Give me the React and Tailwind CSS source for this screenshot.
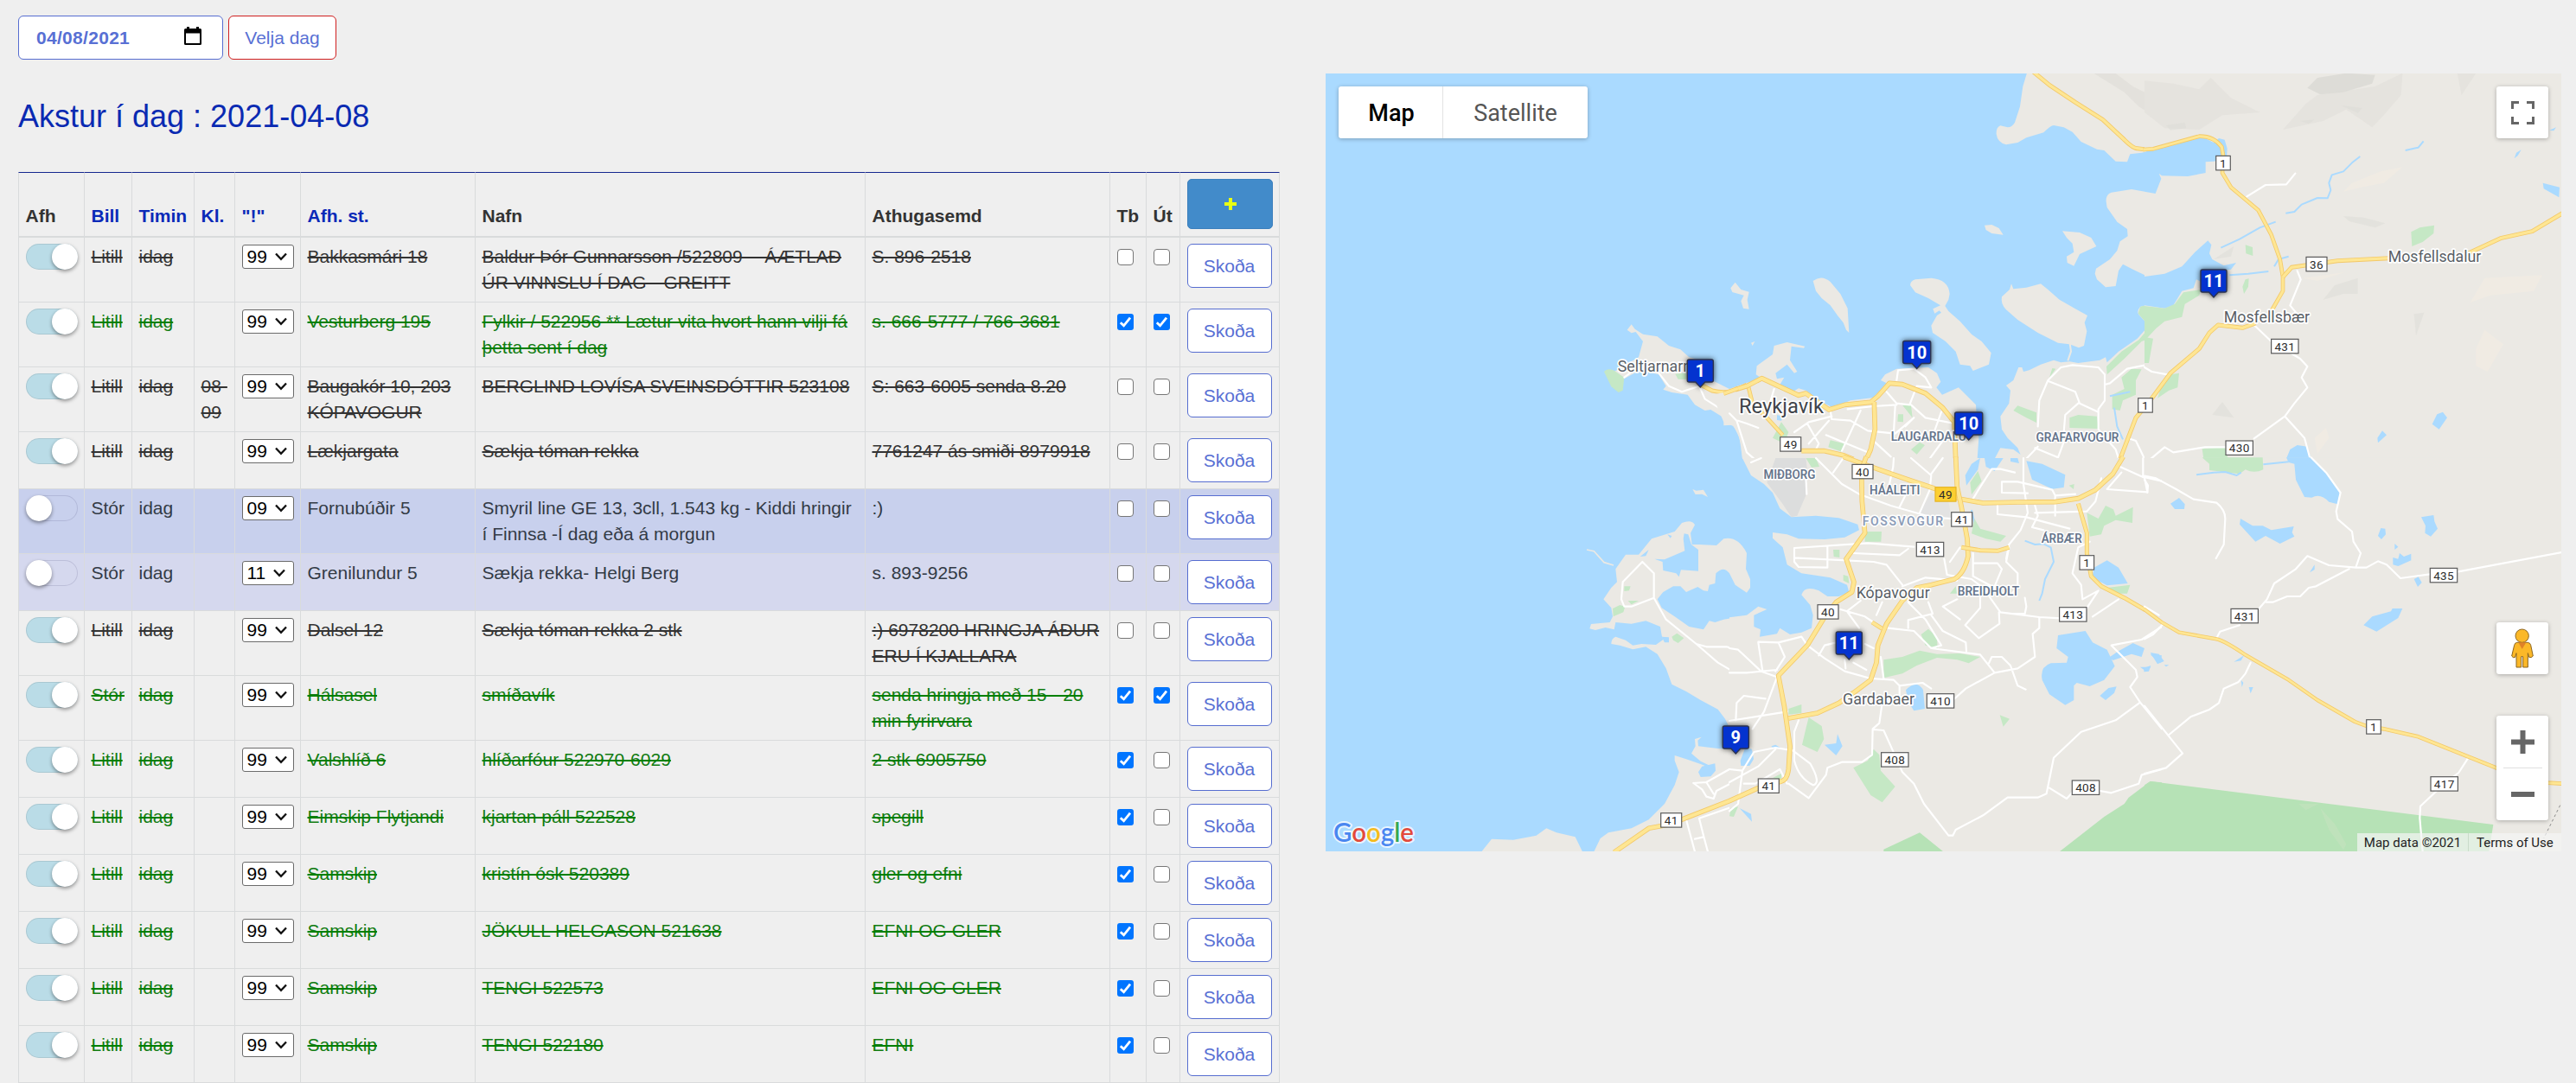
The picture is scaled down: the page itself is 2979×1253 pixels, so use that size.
import React from "react";

const rows = [
  { on: true, tone: "dark", bill: "Litill", kl: "", sel: "99", st: "Bakkasmári 18", nafn: "Baldur Þór Gunnarsson /522809 - -ÁÆTLAÐ\nÚR VINNSLU Í DAG-- GREITT", ath: "S. 896-2518", tb: false, ut: false, tall: true },
  { on: true, tone: "green", bill: "Litill", kl: "", sel: "99", st: "Vesturberg 195", nafn: "Fylkir / 522956 ** Lætur vita hvort hann vilji fá\nþetta sent í dag", ath: "s. 666-5777 / 766-3681", tb: true, ut: true, tall: true },
  { on: true, tone: "dark", bill: "Litill", kl: "08-\n09", sel: "99", st: "Baugakór 10, 203\nKÓPAVOGUR", nafn: "BERGLIND LOVÍSA SVEINSDÓTTIR 523108", ath: "S: 663-6005 senda 8.20", tb: false, ut: false, tall: true },
  { on: true, tone: "dark", bill: "Litill", kl: "", sel: "99", st: "Lækjargata", nafn: "Sækja tóman rekka", ath: "7761247 ás smiði 8979918", tb: false, ut: false },
  { on: false, bg: "bg-[#c8d0ed]", bill: "Stór", kl: "", sel: "09", st: "Fornubúðir 5", nafn: "Smyril line GE 13, 3cll, 1.543 kg - Kiddi hringir\ní Finnsa -Í dag eða á morgun", ath: ":)", tb: false, ut: false, tall: true },
  { on: false, bg: "bg-[#d5d8ee]", bill: "Stór", kl: "", sel: "11", st: "Grenilundur 5", nafn: "Sækja rekka- Helgi Berg", ath: "s. 893-9256", tb: false, ut: false },
  { on: true, tone: "dark", bill: "Litill", kl: "", sel: "99", st: "Dalsel 12", nafn: "Sækja tóman rekka 2 stk", ath: ":) 6978200 HRINGJA ÁÐUR\nERU Í KJALLARA", tb: false, ut: false, tall: true },
  { on: true, tone: "green", bill: "Stór", kl: "", sel: "99", st: "Hálsasel", nafn: "smíðavík", ath: "senda hringja með 15 - 20\nmin fyrirvara", tb: true, ut: true, tall: true },
  { on: true, tone: "green", bill: "Litill", kl: "", sel: "99", st: "Valshlíð 6", nafn: "hlíðarfóur 522970-6029", ath: "2 stk 6905750", tb: true, ut: false },
  { on: true, tone: "green", bill: "Litill", kl: "", sel: "99", st: "Eimskip Flytjandi", nafn: "kjartan páll 522528", ath: "spegill", tb: true, ut: false },
  { on: true, tone: "green", bill: "Litill", kl: "", sel: "99", st: "Samskip", nafn: "kristín ósk 520389", ath: "gler og efni", tb: true, ut: false },
  { on: true, tone: "green", bill: "Litill", kl: "", sel: "99", st: "Samskip", nafn: "JÖKULL HELGASON 521638", ath: "EFNI OG GLER", tb: true, ut: false },
  { on: true, tone: "green", bill: "Litill", kl: "", sel: "99", st: "Samskip", nafn: "TENGI 522573", ath: "EFNI OG GLER", tb: true, ut: false },
  { on: true, tone: "green", bill: "Litill", kl: "", sel: "99", st: "Samskip", nafn: "TENGI 522180", ath: "EFNI", tb: true, ut: false },
];

const head = [
  ["Afh", false], ["Bill", true], ["Timin", true], ["Kl.", true], ['"!"', true],
  ["Afh. st.", true], ["Nafn", false], ["Athugasemd", false], ["Tb", false], ["Út", false],
];

const tones = {
  dark: "text-[#333333] line-through decoration-2",
  green: "text-[#117c11] line-through decoration-[#008000] decoration-2",
};

function Toggle({ on }) {
  return on ? (
    <div className="flex h-[30px] w-[60px] justify-end rounded-full bg-[#badce7] shadow-[inset_0_0_0_1px_rgba(0,0,0,0.09)]">
      <div className="size-[30px] rounded-full bg-white shadow-[0_2px_4px_rgba(0,0,0,0.4)]" />
    </div>
  ) : (
    <div className="flex h-[30px] w-[60px] rounded-full shadow-[inset_0_0_0_1px_rgba(60,60,110,0.16)]">
      <div className="size-[30px] rounded-full bg-white shadow-[0_2px_4px_rgba(0,0,0,0.4)]" />
    </div>
  );
}

function Check({ on }) {
  return on ? (
    <div className="mt-[6px] flex size-[19px] items-center justify-center rounded-[3px] bg-[#0075ff]">
      <svg viewBox="0 0 19 19" className="size-[19px]" fill="none" stroke="#fff" strokeWidth="2.8">
        <path d="M3.8 10.2 L7.6 13.8 L15 4.6" />
      </svg>
    </div>
  ) : (
    <div className="mt-[6px] size-[19px] rounded-[4px] border border-[#767676] bg-white" />
  );
}

function Select({ value }) {
  return (
    <div className="mt-[1px] flex h-[28px] w-[60px] items-center rounded-[3px] border border-[#6b6b6b] bg-white pl-[5px] text-black">
      <span className="leading-[26px]">{value}</span>
      <svg viewBox="0 0 14 10" className="ml-[9px] h-[10px] w-[14px]" fill="none" stroke="#111" strokeWidth="2.3">
        <path d="M1 1.5 L7 7.8 L13 1.5" />
      </svg>
    </div>
  );
}

function Cell({ first, className = "", children }) {
  return (
    <td className={"border-l border-[#d9dbdc] p-0 pl-[7.5px] pt-[7px] align-top whitespace-pre " + (first ? "border-t-2 " : "border-t ") + className}>
      {children}
    </td>
  );
}

const LAND = "#ebe9e4";
const SEA = "#aadaff";
const PARK = "#c5e8c5";

const Land = ({ d }) => <path d={d} fill={LAND} />;
const Water = ({ d }) => <path d={d} fill={SEA} />;
const Green = ({ d }) => <path d={d} fill={PARK} />;
const River = ({ d }) => <path d={d} fill="none" stroke={SEA} strokeWidth="6" strokeLinejoin="round" />;
const Street = ({ d }) => <path d={d} fill="none" stroke="#ffffff" strokeWidth="6.5" strokeLinejoin="round" strokeLinecap="round" />;
const Highway = ({ d, w = 17 }) => (
  <g fill="none" strokeLinejoin="round">
    <path d={d} stroke="#f3c969" strokeWidth={w} />
    <path d={d} stroke="#fee693" strokeWidth={w - 5} />
  </g>
);
const Sector = ({ x, y, children }) => <g transform={`translate(${x} ${y}) scale(0.333333)`}>{children}</g>;

const towns = [
  ["Seltjarnarnes", 1870.7, 429.5, 104, 18.5],
  ["Reykjavík", 2011, 477.5, 98, 24.5],
  ["Mosfellsbær", 2571.7, 373, 99.3, 19],
  ["Mosfellsdalur", 2761.7, 303, 107.7, 19],
  ["Kópavogur", 2146.7, 692, 85, 19],
  ["Gardabaer", 2131, 814.6, 83, 19],
];
const districts = [
  ["LAUGARDALU", 2186.7, 510.3, 87],
  ["GRAFARVOGUR", 2354.5, 511.3, 96],
  ["MIÐBORG", 2039.5, 553.6, 60],
  ["HÁALEITI", 2162, 572.3, 58.5],
  ["FOSSVOGUR", 2153.7, 608.3, 93.5],
  ["ÁRBÆR", 2360.7, 628, 47],
  ["BREIDHOLT", 2263.7, 689.3, 71.5],
];
const shields = [
  ["49", 2070.7, 514], ["49", 2250, 572], ["40", 2154, 545.7], ["41", 2268.7, 601], ["413", 2232, 635.7],
  ["1", 2413.3, 651], ["40", 2114, 708], ["413", 2397.3, 711], ["410", 2244, 811], ["408", 2191.3, 879],
  ["408", 2412, 911.3], ["41", 2045.3, 909.3], ["41", 1932.7, 949], ["1", 2481, 469], ["1", 2571, 188.7],
  ["36", 2679, 305.7], ["431", 2642.3, 400.7], ["430", 2589.7, 518.3], ["431", 2595.7, 712.7],
  ["435", 2826, 665.7], ["1", 2745, 841], ["417", 2826.7, 907],
];
const pins = [
  ["1", 1966.3, 429, 30], ["10", 2216.7, 407.5, 32], ["10", 2276.7, 490, 32],
  ["11", 2560, 325, 30], ["11", 2138.3, 744, 30], ["9", 2007.3, 853, 30],
];

function MapCanvas() {
  return (
    <svg viewBox="1533 85 1429 900" className="block h-[900px] w-[1429px]" fontFamily="Roboto, sans-serif">
      <rect x="1533" y="85" width="1429" height="900" fill={SEA} />

      {/* Seltjarnarnes */}
      <Sector x={1520} y={70}>
        <Land d="M1085 935 L1100 916 L1112 932 L1140 950 L1190 958 L1230 990 L1270 1003 L1300 1030 L1340 1040 L1380 1110 L1440 1140 L1500 1118 L1560 1110 L1560 1382 L1485 1382 L1482 1340 L1468 1290 L1450 1265 L1420 1267 L1420 1240 L1375 1212 L1355 1215 L1320 1195 L1295 1160 L1240 1152 L1210 1142 L1220 1130 L1195 1090 L1130 1075 L1075 1104 L1040 1080 L1125 1030 L1140 975 L1115 942 L1100 946 Z" />
        <Green d="M1005 1080 Q1015 1066 1040 1076 L1075 1100 L1070 1145 L1055 1152 L1030 1132 Z M1252 1088 L1290 1083 L1290 1107 L1262 1106 Z" />
        <Street d="M1075 1100 L1095 1085 M1195 1085 L1230 1130 L1275 1150 L1335 1130 L1355 1175 L1450 1235 L1470 1260 L1500 1340 M1470 1255 L1500 1235" />
        <Highway w={15} d="M1340 1125 L1380 1146 Q1430 1158 1465 1142 L1500 1126" />
      </Sector>

      {/* Reykjavík harbour, islands, Grafarvogur */}
      <Sector x={2000} y={70}>
        <Land d="M1033 40 L1018 90 L1008 160 L990 215 Q980 232 965 232 L940 226 Q925 232 926 255 Q930 285 960 292 L1000 285 L1030 268 L1090 250 Q1115 225 1125 225 L1160 232 L1190 248 L1220 282 L1275 308 L1300 312 L1340 350 L1380 352 L1390 325 L1430 320 L1450 316 L1450 40 Z" />
        <Land d="M1450 457 L1395 447 L1325 458 Q1305 465 1307 490 L1310 510 L1345 560 L1380 585 L1382 610 L1355 628 L1345 660 L1320 690 L1272 722 L1268 740 L1275 760 L1305 787 L1340 783 L1350 730 L1365 707 L1400 725 L1450 749 Z" />
        <path d="M1265 45 L1340 45 L1400 90 L1500 140 L1500 210 L1420 160 L1370 110 Z" fill="#dddcd7" opacity=".6" />
        <Land d="M1450 848 L1425 855 Q1412 870 1420 882 L1455 920 L1415 965 L1350 1010 L1310 1048 L1305 1030 L1285 1040 L1210 1050 L1180 1045 L1150 1048 L1125 1040 L1080 1055 L1040 1075 L1020 1080 L1015 1065 L1003 1065 L985 1110 L960 1128 L975 1145 L970 1190 L940 1235 L945 1280 L965 1310 L1000 1345 L1010 1368 L985 1350 L940 1345 L920 1382 L1450 1382 Z" />
        <Land d="M-60 1160 L0 1148 L60 1122 L105 1098 L92 1090 L95 1060 L150 1020 L155 990 L200 978 L262 992 L258 998 L215 992 L210 1040 L235 1080 L225 1085 L200 1055 L160 1085 L165 1105 L190 1100 L175 1125 L220 1150 L240 1138 L265 1145 L290 1165 L330 1190 L360 1205 L420 1180 L500 1170 L545 1120 L525 1110 L540 1090 L580 1070 L690 1065 L720 1085 L733 1115 L718 1135 L738 1160 L795 1135 L825 1165 L855 1195 L858 1250 L865 1310 L860 1382 L45 1382 L35 1310 L15 1270 L-20 1255 Z" />
        <Land d="M290 765 Q320 742 350 768 L385 810 L410 860 L415 945 L405 935 L395 910 L375 885 L350 850 L320 825 L300 800 Z" />
        <Land d="M627 780 Q628 765 645 760 L700 755 Q760 760 764 810 L760 830 L748 852 L760 870 L800 905 L840 950 L875 975 L908 1015 L900 1055 L845 1077 L835 1060 L800 1055 L785 1010 L750 975 L705 945 L700 920 L720 885 L735 875 L728 868 L712 878 L706 862 L732 850 L690 825 L645 805 Z" />
        <Land d="M945 820 L972 795 L978 775 L985 793 L1030 788 L1080 775 L1105 795 L1145 830 L1200 862 L1242 885 L1232 910 L1240 940 L1230 990 L1212 997 L1180 985 L1140 980 L1070 945 L1000 900 L960 865 Q940 845 945 820 Z" />
        <Land d="M885 572 L910 570 L935 582 L950 605 L910 600 L890 588 Z M1155 592 L1215 597 L1255 615 L1273 645 L1215 672 L1195 713 L1172 702 L1170 680 L1195 665 L1190 635 L1170 615 Z M4 790 L20 770 L40 795 L68 803 L62 830 L68 863 L48 860 L40 835 L50 815 L10 804 Z M75 980 L88 975 L80 990 Z" />
        <path d="M1181 982 L1185 1010 L1174 1042" fill="none" stroke={LAND} strokeWidth="6" />
        <Green d="M1425 855 Q1440 845 1500 860 L1500 960 L1455 1050 L1442 1048 L1455 965 L1430 975 L1370 1035 L1310 1090 L1308 1062 L1360 1010 L1420 970 L1458 925 L1418 878 Z M1360 1100 L1395 1070 L1430 1072 L1410 1110 L1410 1160 L1365 1180 L1355 1215 L1328 1210 L1328 1160 L1370 1140 Z M985 1215 L1000 1198 L1065 1222 L1065 1257 L1030 1240 Z M1180 1240 L1210 1230 L1275 1235 L1280 1278 L1180 1275 Z M180 1255 L205 1290 L190 1330 L150 1310 Z M350 1318 L398 1330 L390 1358 L343 1342 Z M585 1228 L603 1228 L603 1255 L583 1253 Z M600 1196 L630 1196 L635 1240 Z M630 1350 L660 1325 L678 1335 L650 1367 Z M1120 1068 L1132 1070 L1110 1100 Z" />
        <River d="M1335 1205 L1345 1270 L1365 1315 M1320 1165 L1390 1150" />
        <Water d="M165 1230 L185 1235 L180 1250 L165 1248 Z" />
        <Street d="M0 1225 L25 1250 L60 1360 L85 1382 M30 1250 L60 1260 L100 1275 M155 1140 L140 1190 M350 1215 L355 1245 L420 1250 L480 1285 L575 1295 L640 1240 M455 1215 L390 1355 M345 1250 L275 1330 M270 1260 L310 1330 L300 1350 M335 1300 L480 1360 M545 1150 L580 1190 L625 1195 L650 1130 L700 1135 M580 1110 L585 1075 L640 1070 L680 1100 L700 1135 M410 1210 L500 1200 L580 1195 M575 1200 L570 1290 M630 1195 L680 1240 L780 1260 M735 1220 L710 1290 M505 1325 L560 1375 M740 1320 L695 1382 M640 1240 L610 1270 M225 1290 L275 1255 L355 1235" />
        <Street d="M1070 1270 L1075 1180 L1105 1110 L1150 1065 L1190 1057 L1280 1065 L1302 1090 L1302 1180 L1280 1210 L1280 1280 L1340 1350 L1350 1382 M1105 1112 L1200 1150 L1215 1190 L1280 1220 M1210 1190 L1165 1230 L1160 1290 M1070 1340 L1030 1382 M1060 1345 L1140 1378 L1165 1310 L1200 1310 M1302 1125 L1320 1120 L1380 1070 L1440 1058 L1500 1088 M1380 1310 L1410 1320 L1440 1382" />
        <Highway w={14} d="M65 1130 L80 1190 L130 1240 L185 1300" />
        <Highway d="M20 1142 L60 1130 L112 1103 L240 1162 L265 1155 L345 1212 L400 1195 L490 1186 L515 1165 L555 1120 L600 1124 L680 1155 L740 1205 L780 1255 L785 1384 M502 1185 L505 1280 L490 1350 L475 1384 M250 1355 L330 1355 L395 1370 L430 1384" />
        <Highway w={15} d="M-20 1156 L30 1138" />
        <Highway w={15} d="M1055 40 L1110 85 L1200 145 L1295 205 L1370 275 Q1400 305 1415 305 L1445 309" />
      </Sector>

      {/* Mosfellsbær */}
      <Sector x={2480} y={70}>
        <rect x="0" y="44" width="1450" height="1340" fill={LAND} />
        <g fill="#dddcd7">
          <path d="M565 95 L600 60 L700 44 L800 50 L790 80 L690 110 L610 118 Z" />
          <path d="M0 70 L100 80 L190 100 L230 60 L300 130 L400 180 L270 190 L190 240 L70 235 L0 180 Z M480 240 L560 150 L600 120 L800 90 L895 44 L890 120 L830 190 L790 232 L700 170 L620 210 Z M1085 44 L1150 44 L1100 120 Z" opacity=".45" />
          <path d="M75 225 L140 215 L145 235 L90 242 Z M680 155 L755 165 L740 182 Z M540 210 L590 205 L570 220 Z M690 540 L760 545 L835 565 L800 580 L710 558 Z M620 830 L660 780 L740 755 L740 810 L690 810 Z M935 880 L970 875 L942 955 Z M235 1230 L270 1185 L310 1240 Z M240 690 L310 645 L300 680 Z" opacity=".55" />
        </g>
        <path d="M690 455 L720 425 L820 385 L895 370 L830 425 L750 440 Z M1130 840 L1180 755 L1380 745 L1350 800 L1200 815 Z M1150 1000 L1180 935 L1245 985 L1190 1080 L1150 1060 Z M550 755 L695 735 L600 765 Z M590 1310 L630 1275 L640 1310 L600 1365 Z" fill="#f0ebe3" />
        <Water d="M0 318 L30 308 L200 265 L240 285 L258 270 L278 275 L287 305 L285 340 L240 350 L212 352 L212 390 L150 402 L60 400 L50 392 L58 410 L38 462 L0 455 Z M0 750 L70 740 L130 715 L175 665 L220 625 L232 640 L225 670 L235 690 L275 712 L318 702 L300 725 L265 730 L200 770 L180 760 L170 790 L130 800 L100 850 L70 860 L0 850 Z" />
        <Water d="M1382 425 L1440 440 L1438 475 L1385 445 Z M1015 1228 L1035 1220 L1050 1240 L1022 1280 L998 1262 Z M808 1310 L825 1285 L840 1300 L810 1327 Z M492 1382 L505 1350 L530 1335 L565 1340 L578 1382 Z M1283 340 L1290 320 L1307 310 L1295 330 Z M1405 242 L1428 232 L1420 244 Z M0 910 L15 915 L0 930 Z" />
        <River d="M490 530 L520 525 L545 500 L600 477 L635 478 L646 450 L640 425 L650 397 L690 385 L720 355 L748 333 M265 650 L330 620 L400 580 L455 560 M295 745 L360 740 L430 732 M450 715 L465 690 L500 680 M905 312 L950 302 L968 280" />
        <Green d="M925 595 L955 580 L1005 572 L1003 600 L965 630 L928 645 Z M350 640 L375 648 L376 678 L352 670 Z M340 785 L350 760 L362 757 L360 785 L345 810 Z M0 852 L70 860 L105 845 L135 805 L195 795 L190 815 L140 845 L130 890 L70 905 L40 930 L10 962 L0 962 Z M0 960 L30 965 L15 1050 L0 1050 Z M45 1172 L60 1125 L90 1090 L120 1085 L115 1135 L85 1145 Z M200 1348 L280 1342 L290 1382 L205 1382 Z" />
        <Street d="M355 472 L420 432 L492 430 L523 392 M530 730 L542 760 L505 850 L530 880 M380 918 L440 975 L540 1035 L565 1062 L545 1100 L565 1135 L520 1190 L487 1235 L380 1312 M487 1235 L555 1310 L575 1384 M290 1342 L210 1342 L100 1360 L70 1342 L20 1384 M0 1065 L25 1080 L80 1090" />
        <Highway w={14} d="M-5 309 L30 307 L190 263 Q240 262 268 300 L273 330 L270 390 L300 440 L395 520 L440 605 L470 690 L480 750 L480 800 L440 870" />
        <Highway w={15} d="M480 752 L510 718 L670 695 L850 686 M1125 668 L1235 617 L1345 593 L1450 530" />
        <Highway w={15} d="M385 912 L340 928 L255 918 L225 945 L190 1000 L90 1085 L20 1180 L-30 1240 L-85 1384" />
      </Sector>

      {/* Álftanes and Hafnarfjörður shore */}
      <Sector x={1520} y={530}>
        <Land d="M1312 108 L1325 113 L1350 110 L1365 135 L1345 125 L1322 126 Z" />
        <Land d="M1045 385 L1080 335 L1125 335 L1170 280 L1250 255 L1275 225 Q1310 212 1320 232 L1305 260 L1310 300 L1335 300 L1395 303 L1420 280 Q1470 270 1500 330 L1497 385 L1512 420 L1512 450 L1500 467 L1460 440 L1440 400 Q1420 372 1393 400 L1390 435 L1370 440 L1365 462 L1350 460 L1330 447 L1290 465 L1270 445 L1245 445 L1210 465 L1190 490 L1205 520 L1250 550 L1300 585 L1350 595 L1370 565 L1390 570 L1420 560 L1480 550 L1500 548 L1500 1000 L1500 1040 L1480 1040 L1478 1070 L1500 1075 L1500 1366 L970 1366 L992 1320 L1020 1300 L1100 1285 L1160 1255 L1215 1200 L1250 1135 L1265 1090 L1250 1050 L1250 1032 L1290 1045 L1340 1062 L1380 1078 L1378 1070 L1340 1052 L1308 1025 L1322 1000 L1320 975 L1343 968 L1330 980 L1332 1000 L1400 1008 L1450 1010 L1440 935 L1425 905 L1400 872 L1340 840 L1290 810 L1240 785 L1220 730 L1190 680 L1150 655 L1105 664 L1060 650 L1030 645 Q1030 625 1045 620 L1080 632 L1105 650 L1135 645 L1185 648 L1210 630 L1205 615 L1200 585 L1150 565 L1100 575 L1045 570 L1040 595 L1010 588 L975 597 L955 592 L960 576 L1025 570 L1035 550 L1030 520 L1003 490 L1030 450 L1050 430 Z" />
        <Land d="M580 1366 L615 1322 L690 1325 L770 1310 L805 1285 L840 1300 L905 1315 L930 1366 Z" />
        <Water d="M1283 262 L1297 265 L1308 300 L1332 318 L1332 392 L1272 388 L1265 412 L1255 400 L1210 390 L1208 360 L1180 350 L1215 352 L1285 322 L1280 280 Z M1130 342 L1160 318 L1150 340 Z M1345 1070 L1390 1060 L1392 1085 L1375 1105 L1340 1107 L1332 1090 Z M1225 265 L1240 270 L1235 278 Z M1205 620 L1230 622 L1230 640 L1215 640 Z" />
        <path d="M945 318 L970 323 L1005 362 L1038 372" fill="none" stroke={LAND} strokeWidth="5" />
        <Green d="M1035 522 L1060 510 L1078 515 L1072 535 L1037 550 Z M1088 495 L1125 495 L1100 508 Z M1075 445 L1097 445 L1092 460 L1075 462 Z M1240 620 L1258 608 L1282 625 L1262 642 L1245 632 Z M1445 1215 L1470 1205 L1462 1240 L1440 1243 Z" />
        <Street d="M1138 360 L1070 430 L1065 490 L1075 515 L1100 515 L1178 485 L1178 400 Z M1178 485 L1220 560 L1325 645 L1360 655 L1430 655 L1465 665 L1505 705 M1325 645 L1400 710 L1460 745 L1505 743 M1500 825 L1485 830 L1465 855 L1462 920 L1500 912 M1315 1128 L1345 1150 L1360 1175 L1385 1182 L1395 1155 L1500 1100 M1315 1128 L1360 1125 L1385 1165 M1360 1125 L1440 1080 L1500 1085 M1485 1090 L1465 1205 L1335 1250 L1350 1310 L1365 1366 M1290 1255 L1320 1366 M1320 1322 L1350 1315" />
      </Sector>

      {/* Kópavogur, Garðabær, Árbær */}
      <Sector x={2000} y={530}>
        <Land d="M45 0 L75 60 L120 90 L150 120 L175 175 L215 205 L300 200 L380 208 L445 230 L450 250 L400 275 L330 282 L240 280 L200 265 L150 258 L150 278 L185 310 L200 370 L250 400 L350 415 L408 440 L415 465 L380 480 L340 480 L310 460 Q260 440 250 475 L280 510 L290 545 L285 590 L250 605 L210 612 L175 590 L165 610 L105 620 L108 595 L85 585 L85 545 L130 525 L100 515 L60 545 L0 553 L0 935 L20 1000 L0 1030 L0 1366 L1500 1366 L1500 0 Z" />
        <path d="M160 0 L265 0 L272 60 L265 130 L235 200 L215 205 L185 160 L130 85 Z" fill="#dcdddd" />
        <path d="M450 130 L560 165 L700 210 L770 210 L760 150 L700 120 L660 190 Z" fill="#e3e3e3" />
        <Water d="M1030 10 L1085 20 L1165 58 L1160 102 L1120 107 L1050 75 Z M818 60 L840 20 L870 0 L862 40 L822 95 Z M885 0 L950 0 L920 45 L890 30 Z M975 0 L1000 0 L1005 18 L975 12 Z M1265 380 L1310 355 L1350 380 L1382 435 L1310 442 L1258 415 Z M1140 615 L1235 600 L1260 640 L1310 665 L1337 722 L1300 770 L1250 792 L1205 780 L1195 790 L1195 840 L1165 857 L1110 820 L1085 770 Q1076 725 1115 712 L1170 710 L1175 690 L1135 660 Z M1285 825 L1315 798 L1343 793 L1335 815 L1305 840 Z M612 805 Q650 765 672 805 L678 870 L640 877 L620 845 Z M330 995 L370 990 L375 958 L392 1000 L370 1032 Z M35 1215 L75 1235 L78 1262 Z M1350 670 L1400 642 L1440 660 L1430 690 L1395 680 L1330 702 L1320 690 Z M1425 725 L1462 725 L1445 740 Z M1460 682 L1500 685 L1495 712 Z M38 1050 L55 1005 L78 1010 L84 1045 L70 1068 L40 1068 Z M145 1000 L160 995 L185 1010 L150 1005 Z" />
        <River d="M1025 287 L1060 300 L1090 298 L1115 310 L1125 360 L1095 420 L1085 470 L1075 495 M840 180 L850 225 L870 250 M1320 700 L1350 672" />
        <Green d="M265 0 L300 0 L312 30 L285 32 Z M470 255 L528 255 L526 290 L470 290 Z M360 318 L382 318 L382 345 L362 342 Z M835 85 L862 45 L875 80 L840 127 Z M850 210 L870 245 L960 270 L940 290 L890 280 L840 262 Z M1240 190 L1280 210 L1305 165 L1332 178 L1340 200 L1370 185 L1400 170 L1398 225 L1340 215 L1300 235 L1290 265 L1250 272 Z M665 612 L690 593 L720 622 L722 660 L680 650 Z M535 700 L600 690 L660 668 L720 680 L800 678 L870 690 L830 712 L790 700 L720 693 L650 720 L600 748 L535 763 Z M275 900 L320 930 L328 975 L305 1020 L252 995 L265 940 Z M205 870 L250 855 L250 885 L205 890 Z M430 1075 L480 1050 L500 1010 L520 1030 L525 1085 L575 1140 L530 1195 L490 1170 Z M938 892 L972 905 L950 932 Z M1310 450 L1390 440 L1380 470 L1350 470 Z M395 405 L412 410 L415 435 L395 425 Z M1178 95 L1196 90 L1194 108 Z M765 470 L785 445 L790 470 Z M150 1110 L180 1095 L180 1115 Z M5 1215 L30 1210 L15 1245 L0 1243 Z" />
        <path d="M535 1358 L660 1300 L742 1366 L535 1366 Z M1145 1366 L1300 1245 L1370 1200 L1385 1178 L1460 1122 L1500 1126 L1500 1366 Z" fill="#b6e2b6" />
        <Street d="M300 0 L390 90 L450 125 L560 165 L700 205 L770 210 M360 50 L395 0 M570 0 L568 30 L555 90 M630 0 L700 60 L695 110 L660 190 M620 110 L590 170 M740 0 L700 55 M225 312 L225 360 L240 378 L340 380 L340 305 M225 312 L480 295 L640 308 M225 346 L500 360 L545 370 L600 440 M430 330 L590 337 L620 315 M265 60 L268 125 M75 15 L110 0" />
        <Street d="M600 445 L680 415 L790 425 M745 350 L755 405 L840 420 L880 450 L940 535 L1075 552 L1150 556 M800 310 L765 360 M845 330 L845 410 L920 450 M850 365 L930 365 L945 385 L920 445 M970 310 L960 360 L1000 400 L1000 450 L970 480 M870 480 L870 520 L818 580 L865 625 L937 575 L935 535 M1025 485 L1030 515 L1025 540 L975 540 M790 490 L740 515 L800 560 M620 500 L680 560 L735 650 L700 660 L640 600 L550 590 M690 500 L705 540 L620 562 L620 590 M700 545 L740 600 L820 640 L822 670 M700 660 L870 682 L920 745 L1000 730 L1060 690 L1052 610 L1075 590 L1075 555 M900 712 L910 690 L945 690 L975 720 L1000 790 L1028 803 M920 745 L820 800 L770 845 M510 545 L530 500" />
        <Street d="M385 525 L470 550 L500 570 M410 535 L450 590 M410 530 L455 495 M270 650 L330 695 L400 740 L490 765 L570 770 L590 790 L670 780 L700 800 M400 700 L403 730 M310 685 L330 650 L370 640 M430 710 L475 735 M470 645 L500 660 M590 790 L590 830 L530 850 L520 920 L497 940 L495 1030 L460 1055 L390 1055 L340 1075 L335 1100 L275 1180 L205 1130 M500 942 L535 945 L560 1000 L600 1090 L640 1130 L675 1200 L760 1310 L775 1310 L785 1290 L880 1240 L965 1178 L1070 1178 L1100 1165 L1125 1040 L1220 950 L1340 910 L1425 848 M1110 1145 L1170 1182 L1190 1160 M1285 1155 L1325 1162 L1420 1130 L1430 1100 L1500 1080 M1500 940 L1425 848 L1390 795 L1415 760 L1410 735 L1325 650 L1430 630 L1500 585 M525 690 L535 765" />
        <Street d="M0 660 L30 665 L110 740 L165 760 L120 880 L80 940 M0 745 L60 745 L165 735 M100 640 L115 740 M100 638 L170 640 L250 620 L270 650 M170 640 L192 690 L160 740 M22 910 L25 850 L50 825 L125 835 M0 912 L200 880 M0 1080 L45 1085 L85 1020 L160 1005 L220 1015 L280 1060 Q320 1130 290 1135 Q240 1110 225 1050 L225 950 L240 910 M45 1085 L30 1200 L0 1225 M0 1125 L100 1070 L160 1010 M50 1130 L90 1130 L175 1080 L200 1130" />
        <Street d="M1020 0 L1020 90 L1035 190 L1010 250 L970 300 L960 350 M945 120 L945 82 L1000 82 L1120 110 L1130 130 M930 150 L930 195 L1030 205 L1180 245 M945 120 L1035 122 M1130 130 L1130 200 M1060 165 L1070 200 L1050 240 L1090 250 M840 150 L870 100 L910 38 L940 38 L990 50 M1060 190 L1240 185 L1270 150 L1290 70 M1130 130 L1200 125 M1355 30 L1440 68 L1450 118 L1310 108 L1360 50 M1435 0 L1435 65 L1500 80 M1210 310 L1190 400 L1220 440 L1225 490 L1280 460 L1240 520 M1260 550 L1350 490 M1210 310 L1250 290 M1490 590 L1500 585" />
        <Highway w={17} d="M395 -5 L520 40 L620 75 L710 105 L800 142 L880 156 L1000 153 L1130 152 L1210 140 L1270 110 L1330 55 L1366 -5" />
        <Highway w={17} d="M785 -5 L790 100 L805 170 L825 280 L828 340 Q815 400 780 420 L700 440 L650 450 L600 495 L545 575 L515 650 L510 710 L490 770 L430 815 L380 850 L305 885 L205 903 M475 -5 L458 40 L460 150 L470 260 L405 350 L432 430 L425 465 L370 500 L325 560 L270 650 L170 755 L190 860 L210 1000 L205 1080 Q200 1118 180 1122 L100 1145 L0 1190 L-210 1272 L-280 1285 L-400 1368" />
        <Highway w={15} d="M805 310 L870 320 L930 322 L970 310 M495 570 L530 592 M1210 158 L1240 260 L1240 330 L1255 410 L1290 445 L1370 485 L1442 527" />
      </Sector>

      {/* Eastern heath */}
      <Sector x={2480} y={530}>
        <rect x="60" y="-1" width="1390" height="1368" fill={LAND} />
        <Water d="M492 -2 L578 -2 L640 60 L678 115 L670 160 L640 152 Q610 120 580 137 L555 135 L525 75 L520 20 L500 15 Z M90 158 L120 138 L140 160 L138 177 L105 177 Z M333 210 L375 235 L410 235 L440 250 L518 237 L512 258 L520 272 L470 297 L420 270 L385 290 L330 230 Z M960 205 L1003 198 L1006 220 L1017 245 L993 272 L973 260 L975 235 Z M810 270 L820 243 L835 245 L837 265 L822 282 Z M862 345 L880 350 L885 330 L900 342 L925 332 L925 355 L880 375 L862 370 Z M868 297 L880 308 L868 318 Z M935 420 L950 412 L962 432 L948 447 Z M760 580 L790 550 L855 532 L860 522 L895 522 L880 555 L805 602 Z M20 675 L50 680 L68 705 L45 715 Z M-2 728 L22 720 L15 740 L-2 742 Z M573 397 L590 370 L590 387 Z M310 707 L345 685 L335 703 Z M335 770 L343 780 L338 795 Z M362 795 L377 795 L368 817 Z M68 718 L85 718 L75 724 Z" />
        <Green d="M200 -2 L410 -2 L412 40 Q380 55 350 40 L330 55 L225 42 L225 20 Z" />
        <River d="M180 58 L240 50 L280 48 L320 60 L335 50 M412 22 L500 13" />
        <path d="M0 1135 L20 1122 L1210 1272 L1195 1366 L0 1366 Z" fill="#b6e2b6" />
        <path d="M610 1215 L660 1270 L700 1340 L690 1360 L640 1290 Z M535 1200 L605 1200 L560 1222 Z" fill="#c3e3bd" opacity=".7" />
        <Street d="M0 62 L40 70 L110 108 L170 143 L250 155 Q280 180 280 210 L275 300 L248 348 M0 75 L12 95 L10 120 M578 -2 L630 50 L680 120 L665 185 L670 212 L720 255 L725 290 L750 330 L733 380 M395 525 L425 490 L450 435 L525 385 L565 340 L640 372 L733 380 L770 380 L810 358 L840 370 L888 417 L990 403 M422 500 L445 500 L495 480 L540 480 L570 450 L595 445 L710 385 M1085 395 L1447 327 M330 580 L262 602 L250 625 M65 575 L30 612 L0 628 M0 515 L50 545 M0 860 L132 1025 L75 1075 L0 1095 M85 960 L160 898 L225 873 L258 850 L275 800 L325 778 L350 748 L368 710 M1122 1042 L1090 1092 L1040 1130 L957 1208 L955 1250 L965 1366" />
        <Highway w={13} d="M-2 524 L60 570 L120 605 L250 628 Q280 635 350 683 L500 770 L600 840 L730 915 L770 930" />
        <Highway w={14} d="M770 930 L830 940 L950 967 L1220 1075 L1320 1112 L1400 1127 L1450 1130" />
        <path d="M1442 1205 L1385 1320" stroke="#8a8a8a" strokeWidth="3" strokeDasharray="9 9" fill="none" />
      </Sector>

      {/* Labels */}
      {towns.map(([t, x, y, w, s]) => (
        <text key={t} x={x} y={y} textLength={w} lengthAdjust="spacingAndGlyphs" fontSize={s} fill={t === "Reykjavík" ? "#3f444a" : "#5a5f66"} stroke="#ffffff" strokeWidth="3.5" strokeLinejoin="round" paintOrder="stroke">{t}</text>
      ))}
      {districts.map(([t, x, y, w]) => (
        <text key={t} x={x} y={y} textLength={w} lengthAdjust={t === "FOSSVOGUR" ? "spacing" : "spacingAndGlyphs"} fontSize="14" fontWeight="600" fill={t === "FOSSVOGUR" ? "#8d9db8" : "#66758c"} stroke="#ffffff" strokeWidth="3" strokeLinejoin="round" paintOrder="stroke">{t}</text>
      ))}
      {shields.map(([t, x, y], i) => {
        const w = t.length === 1 ? 16.6 : t.length === 2 ? 24 : 31.4;
        return (
          <g key={i}>
            <rect x={x - w / 2} y={y - 8.3} width={w} height="16.4" fill={i === 1 ? "#fccf31" : "#ffffff"} stroke={i === 1 ? "#e6b422" : "#5b5b5b"} strokeWidth="1.2" />
            <text x={x} y={y + 4.8} fontSize="13.5" textAnchor="middle" fill="#2c2c2c" letterSpacing=".3">{t}</text>
          </g>
        );
      })}

      {/* Delivery pins */}
      {pins.map(([t, x, y, w], i) => (
        <g key={i}>
          <path d={`M${x - w / 2 + 2} ${y - 13} h${w - 4} q2 0 2 2 v22 q0 2 -2 2 h${-(w / 2 - 2 - 5.5)} l-5.5 6 l-5.5 -6 h${-(w / 2 - 2 - 5.5)} q-2 0 -2 -2 v-22 q0 -2 2 -2 z`} fill="#0433cf" stroke="#2c3350" strokeWidth="1.4" className="drop-shadow-[0_0_3px_rgba(0,0,0,0.7)]" />
          <text x={x} y={y + 7.4} fontSize="20" fontWeight="700" textAnchor="middle" fill="#ffffff" fontFamily="Roboto, sans-serif">{t}</text>
        </g>
      ))}

      {/* Brand */}
      <text x="1542" y="973.5" fontSize="30" fontWeight="600" textLength="93" lengthAdjust="spacingAndGlyphs" fontFamily="Lato, sans-serif" stroke="#ffffff" strokeOpacity=".75" strokeWidth="4" strokeLinejoin="round" paintOrder="stroke">
        <tspan fill="#4a86f0">G</tspan><tspan fill="#e3493b">o</tspan><tspan fill="#f5bb1c">o</tspan><tspan fill="#4a86f0">g</tspan><tspan fill="#34a853">l</tspan><tspan fill="#e3493b">e</tspan>
      </text>
    </svg>
  );
}

function MapPanel() {
  return (
    <div className="relative mt-[85px] ml-[53px] h-[900px] w-[1429px] shrink-0 overflow-hidden font-[Roboto,sans-serif]">
      <MapCanvas />
      <div className="absolute top-[15px] left-[15px] flex h-[60px] w-[288px] rounded-[3px] bg-white text-[27px] leading-[62px] shadow-[0_1px_5px_rgba(0,0,0,0.28)]">
        <div className="w-[121px] border-r border-[#e3e3e3] pl-[2px] text-center font-medium text-black">Map</div>
        <div className="flex-1 text-center text-[#565656]">Satellite</div>
      </div>
      <div className="absolute top-[15px] right-[15px] flex size-[60px] items-center justify-center rounded-[3px] bg-white shadow-[0_1px_5px_rgba(0,0,0,0.28)]">
        <svg viewBox="0 0 27 27" className="size-[27px]" fill="none" stroke="#666" strokeWidth="3">
          <path d="M1.5 9 V1.5 H9 M18 1.5 H25.5 V9 M25.5 18 V25.5 H18 M9 25.5 H1.5 V18" />
        </svg>
      </div>
      <div className="absolute top-[635px] right-[15px] flex size-[60px] items-center justify-center rounded-[3px] bg-white shadow-[0_1px_5px_rgba(0,0,0,0.28)]">
        <svg viewBox="0 0 78 138" className="h-[46px] w-[26px]">
          <g fill="#fbb828" stroke="#8a6420" strokeWidth="3" strokeLinejoin="round">
            <path d="M20 49 H58 Q66 50 68 58 L76 96 Q70 104 62 100 L58 86 V135 H41 V98 H35 V135 H18 V86 L14 100 Q6 104 2 96 L11 58 Q13 50 20 49 Z" />
            <circle cx="38" cy="26" r="23" />
          </g>
          <path d="M25 49 H52 L38 72 Z" fill="#e08228" />
        </svg>
      </div>
      <div className="absolute top-[743px] right-[15px] flex h-[121px] w-[60px] flex-col items-center rounded-[3px] bg-white shadow-[0_1px_5px_rgba(0,0,0,0.28)]">
        <div className="flex h-[60px] items-center justify-center">
          <svg viewBox="0 0 27 27" className="size-[27px]" fill="#666"><path d="M10.5 0 h6 v10.5 H27 v6 H16.5 V27 h-6 V16.5 H0 v-6 h10.5 z" /></svg>
        </div>
        <div className="h-px w-[45px] bg-[#e0e0e0]" />
        <div className="flex h-[60px] items-center justify-center">
          <div className="h-[6px] w-[27px] bg-[#666666]" />
        </div>
      </div>
      <div className="absolute right-0 bottom-0 flex h-[21px] w-[236px] bg-[#f5f5f5]/70 text-[15px] leading-[22px] text-[#222222]">
        <div className="w-[129px] border-r border-[#c9dcc9] text-center whitespace-nowrap">Map data ©2021</div>
        <div className="flex-1 pl-[9px] whitespace-nowrap">Terms of Use</div>
      </div>
    </div>
  );
}

export default function App() {
  return (
    <div className="flex h-[1253px] w-[2979px] overflow-hidden bg-[#efefef] font-['Liberation_Sans',Arial,sans-serif] text-[21px] leading-[30px] text-[#333333]">
      <div className="ml-[21px] w-[1459px] shrink-0">
        <div className="flex gap-[6px] pt-[18px]">
          <div className="flex h-[51px] w-[237px] items-center justify-between rounded-[6px] border border-[#566dd0] bg-white pr-[24px] pl-[20px] text-[#5870d4]">
            <span className="font-bold tracking-[0.3px]">04/08/2021</span>
            <svg viewBox="0 0 20 21" className="mb-[4px] h-[21px] w-[20px]">
              <path fillRule="evenodd" fill="#000" d="M3 0 h3 v2 h8 V0 h3 v2 h1.500 Q20 2 20 3.500 V19.500 Q20 21 18.500 21 H1.500 Q0 21 0 19.500 V3.500 Q0 2 1.500 2 H3 Z M2 7.500 V19 H18 V7.500 Z" />
            </svg>
          </div>
          <div className="flex h-[51px] w-[125px] items-center justify-center rounded-[6px] border border-[#cf1f1f] bg-white text-[#5870d4]">Velja dag</div>
        </div>
        <h1 className="mt-[46px] h-[84px] text-[36px] leading-[40px] text-[#0a2ab2]">Akstur í dag : 2021-04-08</h1>
        <table className="w-[1459px] table-fixed border-separate border-spacing-0">
          <colgroup>
            <col className="w-[76px]" /><col className="w-[55px]" /><col className="w-[72px]" /><col className="w-[47px]" />
            <col className="w-[76px]" /><col className="w-[202px]" /><col className="w-[451px]" /><col className="w-[283px]" />
            <col className="w-[42px]" /><col className="w-[39px]" /><col className="w-[116px]" />
          </colgroup>
          <thead>
            <tr className="h-[74px]">
              {head.map(([t, link]) => (
                <th key={t} className={"border-t border-l border-t-[#14268f] border-l-[#d9dbdc] p-0 pb-[8px] pl-[7.5px] text-left align-bottom font-bold " + (link ? "text-[#0a2ab8]" : "text-[#333333]")}>{t}</th>
              ))}
              <th className="border-t border-r border-l border-t-[#14268f] border-r-[#d9dbdc] border-l-[#d9dbdc] p-0 pt-[7px] pl-[8px] align-top">
                <div className="flex h-[58px] w-[99px] items-center justify-center rounded-[5px] border border-[#3b7fbd] bg-[#428bca]">
                  <svg viewBox="0 0 14 14" className="size-[14px]" fill="#e8ff14"><path d="M5 0 h4 v5 h5 v4 H9 v5 H5 V9 H0 V5 h5 z" /></svg>
                </div>
              </th>
            </tr>
          </thead>
          <tbody>
            {rows.map((r, i) => {
              const text = r.tone ? tones[r.tone] : "text-[#333b46]";
              const first = i === 0;
              return (
                <tr key={i} className={(first ? "h-[76px] " : r.tall ? "h-[75px] " : "h-[66px] ") + (r.bg || "")}>
                  <Cell first={first}><Toggle on={r.on} /></Cell>
                  <Cell first={first} className={text}>{r.bill}</Cell>
                  <Cell first={first} className={text}>idag</Cell>
                  <Cell first={first} className={text}>{r.kl}</Cell>
                  <Cell first={first}><Select value={r.sel} /></Cell>
                  <Cell first={first} className={text}>{r.st}</Cell>
                  <Cell first={first} className={text}>{r.nafn}</Cell>
                  <Cell first={first} className={text}>{r.ath}</Cell>
                  <Cell first={first}><Check on={r.tb} /></Cell>
                  <Cell first={first}><Check on={r.ut} /></Cell>
                  <Cell first={first} className="border-r">
                    <div className="flex h-[51px] w-[98px] items-center justify-center rounded-[6px] border border-[#566dd0] bg-white text-[#5870d4]">Skoða</div>
                  </Cell>
                </tr>
              );
            })}
            <tr><td colSpan={11} className="h-px border-t border-[#d9dbdc] p-0" /></tr>
          </tbody>
        </table>
      </div>
      <MapPanel />
    </div>
  );
}
